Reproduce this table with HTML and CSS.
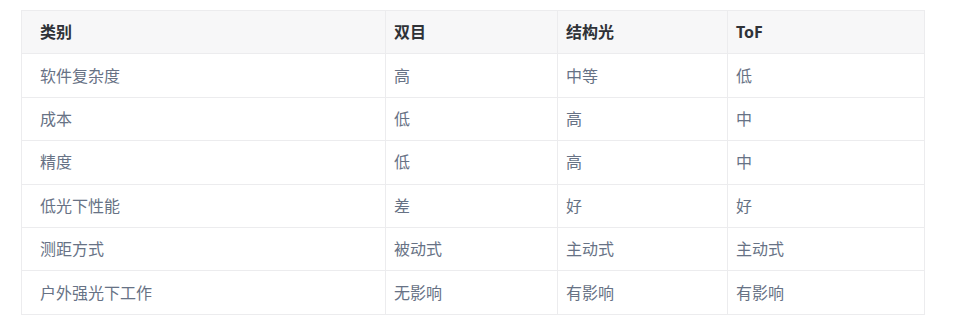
FILE: index.html
```html
<!DOCTYPE html>
<html lang="zh">
<head>
<meta charset="utf-8">
<title>对比</title>
<link rel="stylesheet" href="styles.css">
</head>
<body>
<table class="cmp">
  <colgroup>
    <col class="c1"><col class="c2"><col class="c3"><col class="c4">
  </colgroup>
  <thead>
    <tr><th>类别</th><th>双目</th><th>结构光</th><th>ToF</th></tr>
  </thead>
  <tbody>
    <tr><td>软件复杂度</td><td>高</td><td>中等</td><td>低</td></tr>
    <tr><td>成本</td><td>低</td><td>高</td><td>中</td></tr>
    <tr><td>精度</td><td>低</td><td>高</td><td>中</td></tr>
    <tr><td>低光下性能</td><td>差</td><td>好</td><td>好</td></tr>
    <tr><td>测距方式</td><td>被动式</td><td>主动式</td><td>主动式</td></tr>
    <tr><td>户外强光下工作</td><td>无影响</td><td>有影响</td><td>有影响</td></tr>
  </tbody>
</table>
</body>
</html>
```
FILE: styles.css
```css
html, body {
  margin: 0;
  background: #ffffff;
}
body {
  padding: 10px 0 0 21px;
  font-family: "Noto Sans", "Noto Sans CJK SC", sans-serif;
  font-size: 16px;
}
.cmp {
  border-collapse: collapse;
  table-layout: fixed;
  width: 903px;
}
.c1 { width: 364px; }
.c2 { width: 172px; }
.c3 { width: 170px; }
.c4 { width: 197px; }
.cmp th,
.cmp td {
  height: 43.4px;
  box-sizing: border-box;
  padding: 0 8px;
  border: 1px solid #ececee;
  text-align: left;
  vertical-align: middle;
  line-height: 20px;
}
.cmp th:first-child,
.cmp td:first-child {
  padding-left: 18px;
}
.cmp th {
  background: #f7f7f8;
  color: #2f3237;
  font-weight: 700;
}
.cmp td {
  color: #677285;
  font-weight: 400;
}
```
